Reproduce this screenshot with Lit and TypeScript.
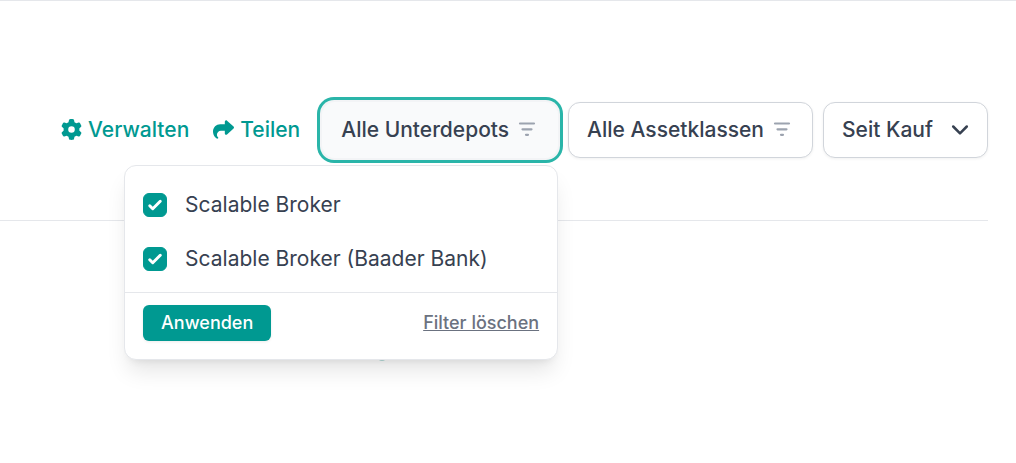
import { LitElement, html, css, svg } from "lit";
import { customElement, property, state } from "lit/decorators.js";

const gearIcon = svg`<svg class="icon gear" viewBox="0 0 512 512" aria-hidden="true"><path fill="currentColor" d="M495.9 166.6c3.2 8.7.5 18.4-6.4 24.6l-43.3 39.4c1.1 8.3 1.7 16.800 1.700 25.400s-.6 17.100-1.700 25.400l43.300 39.400c6.900 6.200 9.600 15.900 6.400 24.600c-4.400 11.900-9.700 23.300-15.800 34.300l-4.700 8.100c-6.600 11-14 21.400-22.100 31.200c-5.900 7.200-15.700 9.600-24.500 6.800l-55.700-17.700c-13.400 10.300-28.200 18.900-44 25.400l-12.500 57.100c-2 9.100-9 16.300-18.200 17.800c-13.800 2.300-28 3.500-42.500 3.500s-28.700-1.200-42.500-3.500c-9.200-1.500-16.200-8.700-18.200-17.800l-12.500-57.100c-15.800-6.500-30.600-15.100-44-25.400L83.100 425.900c-8.800 2.800-18.600.3-24.500-6.800c-8.100-9.800-15.500-20.200-22.100-31.200l-4.700-8.100c-6.100-11-11.400-22.400-15.800-34.300c-3.200-8.700-.5-18.400 6.400-24.600l43.300-39.400C64.600 273.100 64 264.600 64 256s.6-17.100 1.700-25.400L22.400 191.200c-6.900-6.200-9.600-15.900-6.400-24.600c4.400-11.900 9.700-23.300 15.800-34.300l4.700-8.100c6.600-11 14-21.400 22.100-31.200c5.900-7.200 15.700-9.600 24.500-6.800l55.700 17.700c13.400-10.300 28.200-18.900 44-25.400l12.500-57.100c2-9.100 9-16.300 18.200-17.800C227.300 1.200 241.500 0 256 0s28.700 1.200 42.500 3.500c9.200 1.500 16.200 8.700 18.200 17.800l12.500 57.100c15.800 6.500 30.600 15.100 44 25.400l55.700-17.700c8.800-2.800 18.600-.3 24.500 6.800c8.100 9.800 15.500 20.200 22.100 31.200l4.700 8.100c6.100 11 11.400 22.400 15.800 34.300zM256 336a80 80 0 1 0 0-160 80 80 0 1 0 0 160z"/></svg>`;

const shareIcon = svg`<svg class="icon share" viewBox="0 0 512 512" aria-hidden="true"><path fill="currentColor" d="M307 34.800c-11.500 5.100-19 16.600-19 29.200v64H176C78.800 128 0 206.800 0 304C0 417.300 81.500 467.900 100.200 478.100c2.500 1.400 5.300 1.900 8.100 1.900c10.900 0 19.700-8.900 19.700-19.700c0-7.500-4.300-14.400-9.800-19.500C108.800 431.900 96 414.400 96 384c0-53 43-96 96-96h96v64c0 12.600 7.400 24.100 19 29.200s25 3 34.400-5.400l160-144c6.700-6.100 10.600-14.700 10.600-23.800s-3.800-17.700-10.600-23.800l-160-144c-9.400-8.500-22.900-10.600-34.400-5.400z"/></svg>`;

const filterIcon = svg`<svg class="filter" viewBox="0 0 18 16" aria-hidden="true"><path fill="none" stroke="currentColor" stroke-width="2.200" stroke-linecap="round" d="M2 1.500h14M4.500 7.300h9M8 12.800h2"/></svg>`;

const chevronIcon = svg`<svg class="chevron" viewBox="0 0 18 12" aria-hidden="true"><path fill="none" stroke="currentColor" stroke-width="2.500" stroke-linecap="round" stroke-linejoin="round" d="M2.200 2.500l6.800 6.800 6.800-6.800"/></svg>`;

@customElement("depot-filter-menu")
export class DepotFilterMenu extends LitElement {
  @property({ attribute: false }) options: string[] = [];
  @state() private selected: Set<string> | null = null;

  static styles = css`
    :host {
      display: block;
      box-sizing: border-box;
      background: #fff;
      border: 1px solid #e5e7eb;
      border-radius: 12px;
      box-shadow: 0 15px 22px -4px rgb(0 0 0 / 0.1), 0 6px 9px -6px rgb(0 0 0 / 0.1);
    }
    .options {
      list-style: none;
      margin: 0;
      padding: 12px 18px 6px;
    }
    .option {
      display: flex;
      align-items: center;
      gap: 18px;
      height: 54px;
      color: #374151;
      white-space: nowrap;
    }
    .box {
      appearance: none;
      flex: none;
      width: 24px;
      height: 24px;
      margin: 0;
      border: 1px solid #d1d5db;
      border-radius: 6px;
      background: #fff;
    }
    .box:checked {
      border-color: #009991;
      background: #009991
        url("data:image/svg+xml,%3Csvg viewBox='0 0 16 16' fill='white' xmlns='http://www.w3.org/2000/svg'%3E%3Cpath d='M12.207 4.793a1 1 0 010 1.414l-5 5a1 1 0 01-1.414 0l-2-2a1 1 0 011.414-1.414L6.5 9.086l4.293-4.293a1 1 0 011.414 0z'/%3E%3C/svg%3E")
        center / 24px no-repeat;
    }
    .footer {
      display: flex;
      align-items: center;
      justify-content: space-between;
      padding: 12px 18px 18px;
      border-top: 1px solid #e5e7eb;
    }
    button {
      font: inherit;
      font-size: 18px;
      font-weight: 500;
      line-height: 24px;
      border: 0;
      cursor: pointer;
    }
    .apply {
      padding: 6px 18px;
      border-radius: 6px;
      background: #009991;
      color: #fff;
      box-shadow: 0 1px 3px rgb(0 0 0 / 0.08);
    }
    .clear {
      padding: 0;
      background: none;
      color: #6b7280;
      text-decoration: underline;
    }
  `;

  private toggle(name: string) {
    const next = new Set(this.selected ?? this.options);
    next.has(name) ? next.delete(name) : next.add(name);
    this.selected = next;
  }

  render() {
    const active = this.selected ?? new Set(this.options);
    return html`
      <ul class="options">
        ${this.options.map(
          (name) => html`<li>
            <label class="option">
              <input class="box" type="checkbox" .checked=${active.has(name)} @change=${() => this.toggle(name)} />
              <span>${name}</span>
            </label>
          </li>`
        )}
      </ul>
      <div class="footer">
        <button class="apply" type="button">Anwenden</button>
        <button class="clear" type="button" @click=${() => (this.selected = new Set())}>Filter löschen</button>
      </div>
    `;
  }
}

@customElement("app-root")
export class AppRoot extends LitElement {
  @state() private open = true;

  static styles = css`
    :host {
      display: block;
      min-height: 100vh;
      font-family: Inter, "Liberation Sans", sans-serif;
      font-size: 21px;
      line-height: 30px;
      color: #374151;
      background: #fff;
    }
    .page {
      border-top: 1px solid #e5e7eb;
      padding-right: 28px;
    }
    .toolbar {
      display: flex;
      align-items: center;
      justify-content: flex-end;
      gap: 10px;
      padding: 101px 0 62px;
      border-bottom: 1px solid #e5e7eb;
      font-weight: 500;
      white-space: nowrap;
    }
    .links {
      display: flex;
      gap: 24px;
      margin-right: 12px;
    }
    .link {
      display: flex;
      align-items: center;
      gap: 6px;
      color: #009991;
      text-decoration: none;
    }
    .icon {
      width: 21px;
      height: 21px;
      margin-bottom: 2px;
    }
    .dropdown {
      position: relative;
    }
    .control {
      box-sizing: border-box;
      height: 56px;
      margin: 0;
      border: 1px solid #d1d5db;
      border-radius: 12px;
      background: #fff;
      box-shadow: 0 1px 3px rgb(0 0 0 / 0.06);
      color: #374151;
      font: inherit;
    }
    .trigger {
      display: flex;
      align-items: center;
      gap: 9px;
      padding: 0 21px 0 18px;
      cursor: pointer;
    }
    .trigger[aria-expanded="true"] {
      border-color: #f9fafb;
      background: #f9fafb;
      box-shadow: 0 0 0 2px #f3f4f6, 0 0 0 5px #2ab5a9;
    }
    .filter {
      width: 18px;
      height: 16px;
      color: #9ca3af;
    }
    .menu {
      position: absolute;
      z-index: 1;
      top: 63px;
      right: 0;
      width: 434px;
      font-weight: 400;
    }
    .period {
      display: grid;
      align-items: center;
    }
    .period > * {
      grid-area: 1 / 1;
    }
    .select {
      appearance: none;
      padding: 0 54px 0 18px;
    }
    .chevron {
      justify-self: end;
      width: 18px;
      height: 12px;
      margin-right: 19px;
      pointer-events: none;
    }
    .content {
      padding: 132px 0 0 378px;
    }
    .marker {
      width: 8px;
      height: 8px;
      border-radius: 50%;
      background: #b5dcda;
    }
  `;

  render() {
    return html`
      <main class="page">
        <div class="toolbar">
          <nav class="links">
            <a class="link" href="#verwalten">${gearIcon}Verwalten</a>
            <a class="link" href="#teilen">${shareIcon}Teilen</a>
          </nav>
          <div class="dropdown">
            <button
              class="control trigger"
              type="button"
              aria-expanded=${this.open ? "true" : "false"}
              @click=${() => (this.open = !this.open)}
            >
              Alle Unterdepots ${filterIcon}
            </button>
            ${this.open
              ? html`<depot-filter-menu
                  class="menu"
                  .options=${["Scalable Broker", "Scalable Broker (Baader Bank)"]}
                ></depot-filter-menu>`
              : null}
          </div>
          <button class="control trigger" type="button" aria-expanded="false">Alle Assetklassen ${filterIcon}</button>
          <div class="period">
            <select class="control select" aria-label="Zeitraum">
              <option>Seit Kauf</option>
            </select>
            ${chevronIcon}
          </div>
        </div>
        <div class="content"><div class="marker"></div></div>
      </main>
    `;
  }
}
